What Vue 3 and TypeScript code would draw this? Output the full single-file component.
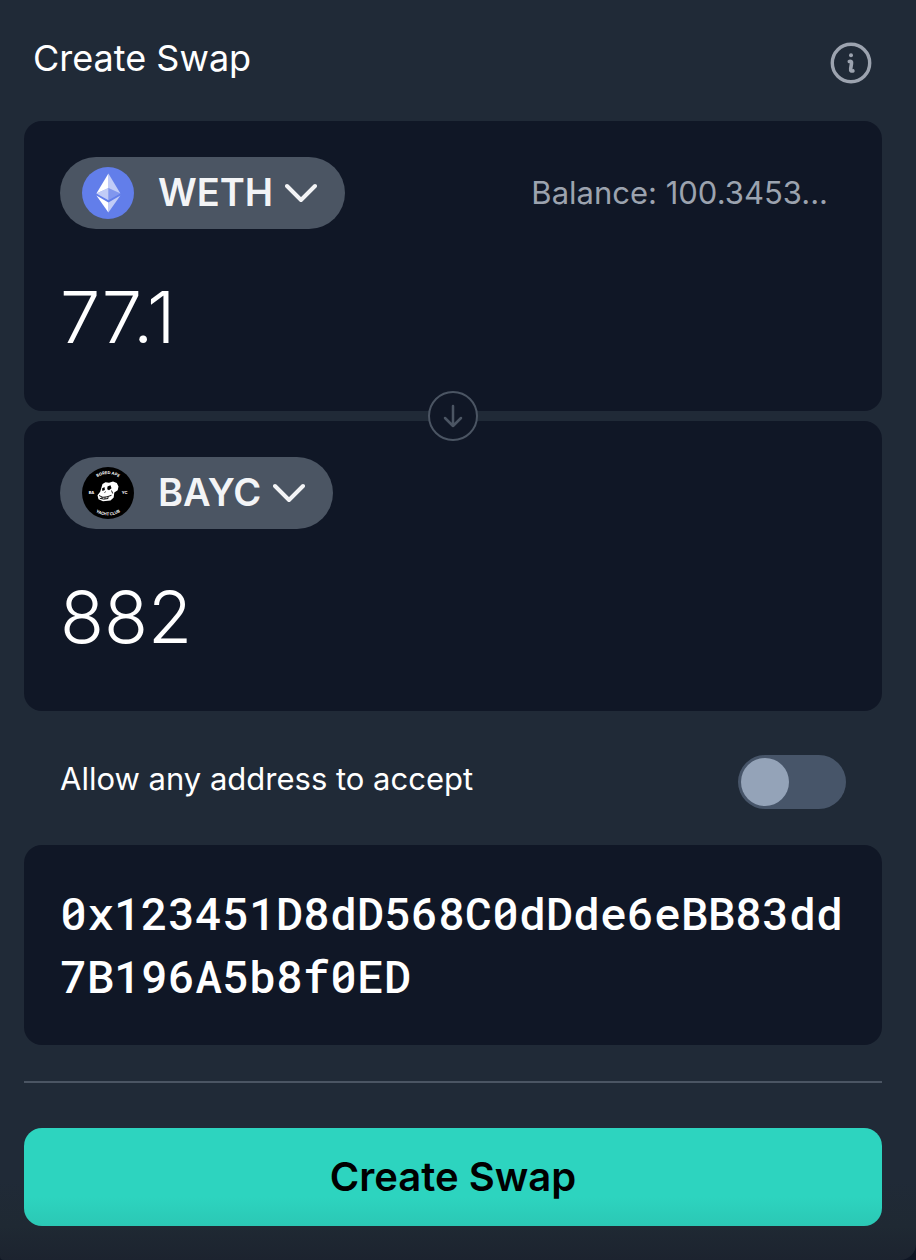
<script setup lang="ts">
import { ref } from 'vue'

const payAmount = ref('77.1')
const receiveAmount = ref('882')
const allowAny = ref(false)
const address = ref('0x123451D8dD568C0dDde6eBB83dd7B196A5b8f0ED')
</script>

<template>
  <main class="card">
    <header class="head">
      <h1 class="title">Create Swap</h1>
      <button class="info" type="button" aria-label="About swaps">
        <svg width="42" height="42" viewBox="0 0 42 42" fill="none" stroke="currentColor" stroke-linecap="round" stroke-linejoin="round">
          <circle cx="21" cy="21" r="18.7" stroke-width="3.4" />
          <circle cx="21" cy="13.200" r="2" fill="currentColor" stroke="none" />
          <path d="M19.300 19.500q2.700-.6 2.200 2l-.8 5.200q-.4 2.900 2.200 2.200" stroke-width="3.600" />
        </svg>
      </button>
    </header>

    <form class="form" @submit.prevent>
      <section class="panel">
        <div class="row">
          <button class="token" type="button">
            <svg class="logo" viewBox="0 0 52 52" aria-hidden="true">
              <circle cx="26" cy="26" r="26" fill="#627eea" />
              <path d="M26.400 6.500v14.400l12 5.500z" fill="#fff" fill-opacity=".602" />
              <path d="M26.400 6.500l-12 19.900 12-5.500z" fill="#fff" />
              <path d="M26.400 35.600v9.900l12-16.900z" fill="#fff" fill-opacity=".602" />
              <path d="M26.400 45.500v-9.900l-12-7z" fill="#fff" />
              <path d="M26.400 33.300l12-6.900-12-5.500z" fill="#fff" fill-opacity=".2" />
              <path d="M14.400 26.400l12 6.900V20.900z" fill="#fff" fill-opacity=".602" />
            </svg>
            <span class="symbol">WETH</span>
            <svg class="chevron" viewBox="0 0 32 20" fill="none" stroke="currentColor" stroke-width="4" stroke-linecap="round" stroke-linejoin="round" aria-hidden="true">
              <path d="M2 3l14 14L30 3" />
            </svg>
          </button>
          <span class="balance">Balance: 100.3453...</span>
        </div>
        <input v-model="payAmount" class="amount" type="text" inputmode="decimal" aria-label="WETH amount" />
      </section>

      <div class="joint">
        <button class="flip" type="button" aria-label="Switch direction">
          <svg width="20" height="24" viewBox="0 0 20 24" fill="none" stroke="currentColor" stroke-width="2.500" stroke-linecap="round" stroke-linejoin="round">
            <path d="M10 2v20M2 14l8 8 8-8" />
          </svg>
        </button>
      </div>

      <section class="panel">
        <div class="row">
          <button class="token" type="button">
            <svg class="logo" viewBox="0 0 52 52" aria-hidden="true">
              <defs>
                <path id="arc-top" d="M7 26a19 19 0 0 1 38 0" />
                <path id="arc-bottom" d="M3.500 26a22.500 22.500 0 0 0 45 0" />
              </defs>
              <circle cx="26" cy="26" r="26" fill="#000" />
              <g class="seal">
                <text><textPath href="#arc-top" startOffset="50%">BORED APE</textPath></text>
                <text><textPath href="#arc-bottom" startOffset="50%">YACHT CLUB</textPath></text>
                <text x="9.500" y="27">BA</text>
                <text x="42.500" y="27">YC</text>
              </g>
              <path d="M20.500 17l3-1.700 3.500.4 4-1.200 3.800 1.500 1.700 3.500-.8 3.800-3.400 2.300-.6 5-3.200 2.800-7.500.8-4.500-2-1-4 2.700-3.500z" fill="#fff" />
              <path d="M20 21.500l2.500-1.500.4 3-2.500 1zM25.500 19.500l3-1.300 1 3-2.500 2-1.800-1z" fill="#000" />
              <path d="M22.500 25.500l1.200-.8M17 28.500q3.500 3 8 1.300l4.500-1.500M17.800 31.300q4 1.600 8.200.2M20 29.800v2M23 30.200v1.600M26 29.500v2M29.500 23.500l1.200 3" fill="none" stroke="#000" stroke-width=".9" />
            </svg>
            <span class="symbol">BAYC</span>
            <svg class="chevron" viewBox="0 0 32 20" fill="none" stroke="currentColor" stroke-width="4" stroke-linecap="round" stroke-linejoin="round" aria-hidden="true">
              <path d="M2 3l14 14L30 3" />
            </svg>
          </button>
        </div>
        <input v-model="receiveAmount" class="amount" type="text" inputmode="decimal" aria-label="BAYC amount" />
      </section>

      <div class="allow">
        <label class="allow-label" for="allow-any">Allow any address to accept</label>
        <input id="allow-any" v-model="allowAny" class="switch" type="checkbox" role="switch" />
      </div>

      <textarea v-model="address" class="address" rows="2" spellcheck="false" aria-label="Counterparty address"></textarea>

      <hr class="rule" />

      <button class="submit" type="submit">Create Swap</button>
    </form>
  </main>
</template>

<style>
body {
  background: #0f1624;
}
</style>

<style scoped>
.card {
  box-sizing: border-box;
  min-height: 100vh;
  padding: 34px 34px 34px 24px;
  border-radius: 0 0 16px 4px;
  background: linear-gradient(to top, #1c232f 0, #1f2933 34px, #202a37 80px);
  color: #fff;
  font-family: Inter, "Liberation Sans", sans-serif;
}

button {
  padding: 0;
  border: 0;
  background: none;
  color: inherit;
  font-family: inherit;
  cursor: pointer;
}

svg {
  display: block;
}

.head {
  display: flex;
  justify-content: space-between;
  align-items: flex-start;
  height: 87px;
  padding: 0 10px 0 9px;
}

.title {
  margin: 0;
  font-size: 36px;
  line-height: 48px;
  font-weight: 400;
}

.info {
  margin-top: 8px;
  color: #9ca3af;
}

.form {
  display: flex;
  flex-direction: column;
}

.panel {
  padding: 36px;
  border-radius: 18px;
  background: #101726;
}

.row {
  display: flex;
  justify-content: space-between;
  align-items: center;
}

.token {
  display: flex;
  align-items: center;
  height: 72px;
  padding: 0 28px 0 22px;
  border-radius: 36px;
  background: #4b5563;
  color: #f3f4f6;
}

.logo {
  width: 52px;
  height: 52px;
}

.seal {
  fill: #fff;
  font-size: 4px;
  font-weight: 700;
  text-anchor: middle;
}

.symbol {
  margin: 0 12px 0 24px;
  padding-bottom: 2px;
  font-size: 38px;
  line-height: 48px;
  font-weight: 600;
}

.chevron {
  width: 32px;
  height: 20px;
}

.balance {
  padding-right: 18px;
  color: #9ca3af;
  font-size: 31px;
  line-height: 48px;
  font-weight: 400;
}

.amount {
  display: block;
  box-sizing: border-box;
  width: 100%;
  height: 96px;
  margin: 39px 0 11px;
  padding: 0;
  border: 0;
  outline: 0;
  background: none;
  color: #fff;
  font-family: inherit;
  font-size: 72px;
  font-weight: 300;
}

.joint {
  display: flex;
  justify-content: center;
  align-items: center;
  height: 10px;
}

.flip {
  display: flex;
  flex: none;
  justify-content: center;
  align-items: center;
  box-sizing: border-box;
  width: 50px;
  height: 50px;
  border: 2px solid #4b5563;
  border-radius: 50%;
  background: #101726;
  color: #4b5563;
  z-index: 1;
}

.allow {
  display: flex;
  justify-content: space-between;
  align-items: center;
  padding: 44px 36px 36px;
}

.allow-label {
  padding-bottom: 6px;
  font-size: 31px;
  line-height: 48px;
}

.switch {
  appearance: none;
  display: flex;
  align-items: center;
  box-sizing: border-box;
  width: 108px;
  height: 54px;
  margin: 0;
  padding: 3px;
  border-radius: 27px;
  background: #475569;
  cursor: pointer;
}

.switch::before {
  content: "";
  width: 48px;
  height: 48px;
  border-radius: 50%;
  background: #94a3b8;
}

.switch:checked {
  justify-content: flex-end;
}

.address {
  display: block;
  box-sizing: border-box;
  width: 100%;
  height: 200px;
  padding: 36px;
  border: 0;
  border-radius: 18px;
  outline: 0;
  resize: none;
  overflow: hidden;
  background: #101726;
  color: #fff;
  font-family: "Roboto Mono", "DejaVu Sans Mono", monospace;
  font-size: 45px;
  line-height: 63px;
  font-weight: 500;
  word-break: break-all;
}

.rule {
  width: 100%;
  height: 2px;
  margin: 36px 0 45px;
  border: 0;
  background: #4b5563;
}

.submit {
  height: 98px;
  padding-bottom: 2px;
  border-radius: 18px;
  background: linear-gradient(#2dd4bf 70%, #2bc8b5);
  color: #000;
  font-size: 40px;
  font-weight: 600;
}
</style>
